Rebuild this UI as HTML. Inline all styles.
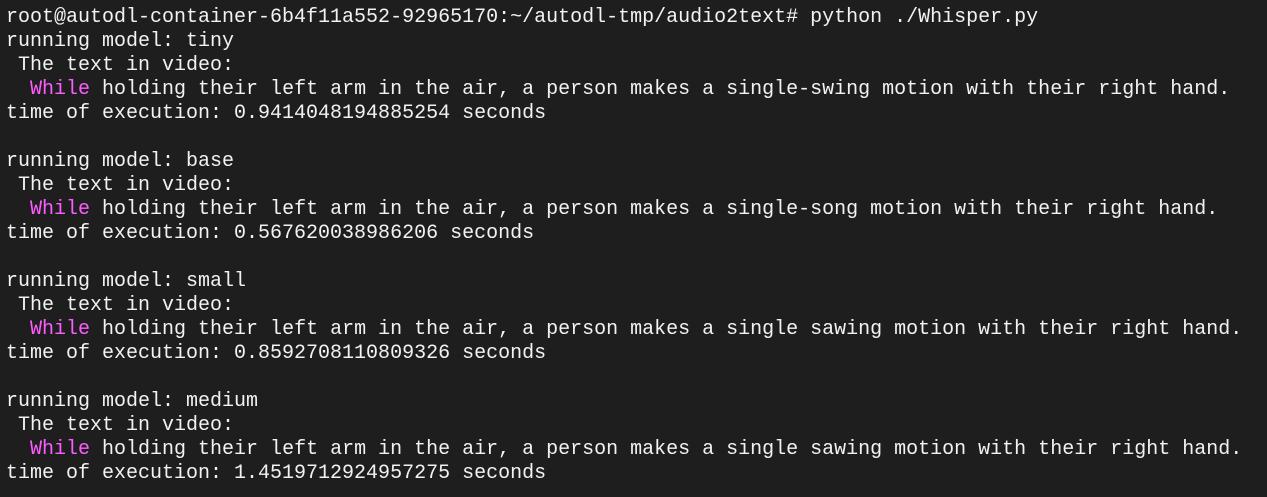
<!DOCTYPE html>
<html><head><style>
html,body{margin:0;padding:0;background:#1e1e1e;width:1267px;height:497px;overflow:hidden}
pre{margin:0;position:absolute;left:6px;top:-18px;font-family:"Liberation Mono",monospace;font-size:20px;line-height:24px;color:#f2f2f2}
.m{color:#ff5cff}
</style></head><body>
<pre>  ˉˉ
root@autodl-container-6b4f11a552-92965170:~/autodl-tmp/audio2text# python ./Whisper.py
running model: tiny
 The text in video:
  <span class="m">While</span> holding their left arm in the air, a person makes a single-swing motion with their right hand.
time of execution: 0.9414048194885254 seconds

running model: base
 The text in video:
  <span class="m">While</span> holding their left arm in the air, a person makes a single-song motion with their right hand.
time of execution: 0.567620038986206 seconds

running model: small
 The text in video:
  <span class="m">While</span> holding their left arm in the air, a person makes a single sawing motion with their right hand.
time of execution: 0.8592708110809326 seconds

running model: medium
 The text in video:
  <span class="m">While</span> holding their left arm in the air, a person makes a single sawing motion with their right hand.
time of execution: 1.4519712924957275 seconds
</pre>
</body></html>
